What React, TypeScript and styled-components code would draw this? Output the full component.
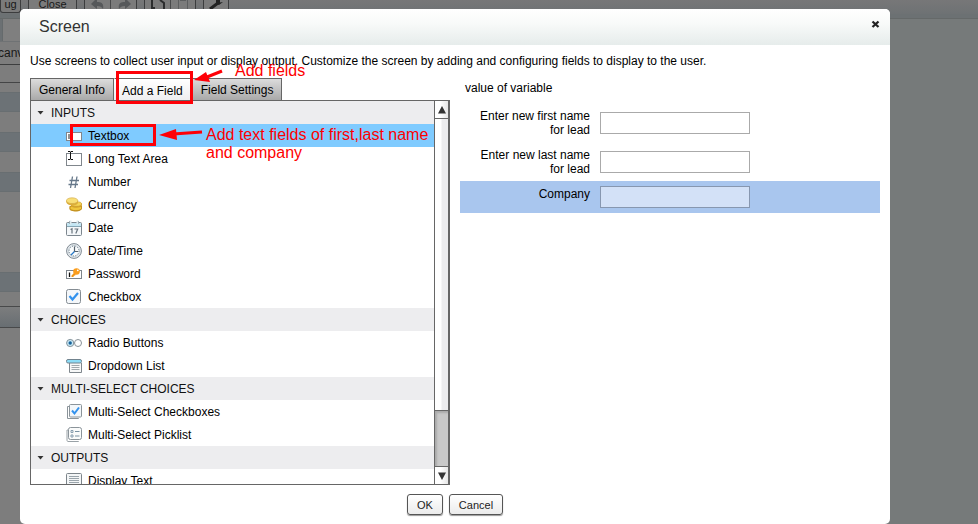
import React from "react";
import styled, { createGlobalStyle, css } from "styled-components";

const GlobalStyle = createGlobalStyle`
  *, *::before, *::after { box-sizing: border-box; }
  body {
    margin: 0;
    background: #767a7a;
    overflow: hidden;
    font-family: "Liberation Sans", Arial, sans-serif;
    font-size: 12px;
    line-height: 14px;
    color: #000;
  }
  button, input { font: inherit; color: inherit; }
`;

/* ---------- Canvas behind the dialog ---------- */

const Page = styled.div`
  position: relative;
  min-height: 100vh;
  display: flex;
  flex-direction: column;
  overflow: hidden;
`;

const Toolbar = styled.div`
  display: flex;
  align-items: flex-start;
  gap: 7px;
  height: 14px;
  background: linear-gradient(#777778, #6e7274);
`;

const ToolGroup = styled.div`
  display: flex;
  height: 13px;
  border: 1px solid #3c3d3e;
  border-top: 0;
  border-radius: 0 0 3px 3px;
  background: #7b7b7b;
`;

const ToolButton = styled.button<{ $width: number }>`
  width: ${(p) => p.$width}px;
  height: 12px;
  padding: 0;
  border: 0;
  background: none;
  font-size: 11px;
  line-height: 8px;
  color: #191919;
  display: flex;
  justify-content: center;
  align-items: flex-start;

  & + & { border-left: 1px solid #48494a; }
`;

const SubBar = styled.div`
  height: 5px;
  background: #6c7173;
  border-bottom: 1px solid #656969;
`;

const SidePanel = styled.aside`
  width: 60px;
  flex: 1;
  background: #7d7d7d;
  display: flex;
  flex-direction: column;
`;

const SideTabs = styled.div`
  height: 23px;
  padding-left: 2px;
  background: #6b7073;
  border-bottom: 1px solid #6f7274;
`;

const SideTab = styled.div`
  height: 22px;
  border-left: 1px solid #656a6c;
  background: #7f7f7f;
`;

const SideText = styled.div`
  height: 23px;
  line-height: 22px;
  text-indent: -2px;
  border-bottom: 1px solid #3d3e3f;
  color: #191919;
`;

const SideStripe = styled.div<{ $height: number; $tone?: "blue" | "plain" | "head" }>`
  height: ${(p) => p.$height}px;
  ${(p) =>
    p.$tone === "blue" &&
    css`
      background: #6c7276;
      border: 1px solid #686e71;
      border-width: 1px 0;
    `}
  ${(p) =>
    p.$tone === "head" &&
    css`
      background: linear-gradient(#7c7d7e, #686e72);
      border: 1px solid #48494a;
      border-width: 1px 0;
    `}
`;

const Rule = styled.div`
  height: 1px;
  background: #444546;
`;

/* ---------- Dialog ---------- */

const Overlay = styled.div`
  position: absolute;
  inset: 0;
  padding: 9px 88px 0 20px;
`;

const Dialog = styled.section`
  position: relative;
  border-radius: 5px;
  background: #fff;
`;

const DialogHeader = styled.header`
  display: flex;
  align-items: center;
  justify-content: space-between;
  height: 36px;
  padding: 0 9px 0 19px;
  border-radius: 5px 5px 0 0;
  background: linear-gradient(#fff, #f8faf9 40%, #e6eceb);
`;

const Title = styled.h1`
  margin: 0;
  font-size: 16px;
  line-height: 20px;
  font-weight: 400;
  color: #333;
`;

const CloseButton = styled.button`
  display: flex;
  width: 10px;
  height: 20px;
  padding: 3px 0;
  border: 0;
  background: none;
`;

const Intro = styled.p`
  margin: 0;
  padding: 9px 10px 10px;
`;

const Columns = styled.div`
  display: grid;
  grid-template-columns: 420px minmax(0, 1fr);
  gap: 10px;
  padding: 0 10px;
`;

const Tabs = styled.div`
  display: flex;
  height: 22px;
`;

const Tab = styled.button<{ $active?: boolean }>`
  padding: ${(p) => (p.$active ? "2px 8px 0 7px" : "0 8px")};
  border: 1px solid #666;
  border-bottom: 0;
  background: ${(p) =>
    p.$active ? "linear-gradient(#fff, #eeeeef)" : "linear-gradient(#dcdcdc, #a9a9a9)"};
  border-color: ${(p) => (p.$active ? "#666 transparent" : "#666")};
`;

const ListBox = styled.div`
  display: flex;
  height: 385px;
  border: 1px solid #666;
  border-right-width: 2px;
`;

const ListContent = styled.div`
  flex: 1;
  overflow: hidden;
`;

const GroupHead = styled.h2`
  display: flex;
  align-items: center;
  gap: 7px;
  height: 23px;
  margin: 0;
  padding-left: 6px;
  background: #ededef;
  font-size: 12px;
  font-weight: 400;
  color: #111;
`;

const Items = styled.ul`
  margin: 0;
  padding: 0;
  list-style: none;
`;

const Item = styled.li<{ $selected?: boolean }>`
  display: flex;
  align-items: center;
  gap: 6px;
  height: 23px;
  padding-left: 35px;
  background: ${(p) => (p.$selected ? "#7fcbff" : "#fff")};
`;

const ScrollBar = styled.div`
  display: flex;
  flex-direction: column;
  width: 14px;
  border-left: 1px solid #666;
`;

const ScrollButton = styled.button`
  display: flex;
  align-items: center;
  justify-content: center;
  height: 17px;
  padding: 0;
  border: 0;
  background: linear-gradient(90deg, #fff 40%, #e6e6e6);
`;

const Track = styled.div`
  flex: 1;
  border-top: 1px solid #666;
  background: linear-gradient(90deg, #fff 45%, #ececee 55%);
`;

const Thumb = styled.div`
  height: 57px;
  border: 1px solid #666;
  border-width: 1px 0;
  background: #c8c8c8;
  box-shadow: inset 2px 2px 2px #aaa;
`;

const Preview = styled.form`
  padding-top: 3px;
`;

const PreviewTitle = styled.p`
  margin: 0;
  padding: 0 5px 8px;
`;

const FieldRow = styled.label<{ $selected?: boolean }>`
  display: grid;
  grid-template-columns: 130px 150px;
  column-gap: 10px;
  align-items: start;
  padding: 5px 0;
  background: ${(p) => (p.$selected ? "#a9c6ee" : "transparent")};
`;

const FieldLabel = styled.span`
  padding: 1px 0 0 10px;
  text-align: right;
`;

const FieldInput = styled.input<{ $selected?: boolean }>`
  align-self: center;
  width: 150px;
  height: 22px;
  padding: 2px 4px;
  border: 1px solid ${(p) => (p.$selected ? "#8797b0" : "#aaa")};
  border-radius: 0;
  background: ${(p) => (p.$selected ? "#d3e1f7" : "#fff")};
`;

const Footer = styled.footer`
  display: flex;
  justify-content: center;
  gap: 6px;
  padding: 9px 0 9px;
`;

const ActionButton = styled.button`
  height: 21px;
  padding: 0 9px;
  border: 1px solid #555;
  border-radius: 3px;
  background: linear-gradient(#fff, #ebebeb);
  box-shadow: 0 1px 1px #999;
  font-size: 11px;
  color: #222;
`;

/* ---------- Red notes over the dialog ---------- */

const Mark = styled.div<{ $x: number; $y: number; $w: number; $h: number }>`
  position: absolute;
  left: ${(p) => p.$x}px;
  top: ${(p) => p.$y}px;
  width: ${(p) => p.$w}px;
  height: ${(p) => p.$h}px;
  border: 3px solid #fe0007;
  pointer-events: none;
`;

const Note = styled.div<{ $x: number; $y: number }>`
  position: absolute;
  left: ${(p) => p.$x}px;
  top: ${(p) => p.$y}px;
  width: 232px;
  font-size: 16px;
  line-height: 18px;
  color: #fe0000;
  pointer-events: none;
`;

const ArrowSvg = styled.svg<{ $x: number; $y: number }>`
  position: absolute;
  left: ${(p) => p.$x}px;
  top: ${(p) => p.$y}px;
  pointer-events: none;
`;

/* ---------- Icons ---------- */

const Svg = ({ children }: { children: React.ReactNode }) => (
  <svg width="16" height="16" viewBox="0 0 16 16" fill="none" aria-hidden="true">
    {children}
  </svg>
);

const icons: Record<string, React.ReactNode> = {
  textbox: (
    <Svg>
      <rect x="0.5" y="4.5" width="15" height="8" fill="#fff" stroke="#80868c" />
      <path d="M3 6v5" stroke="#222" />
    </Svg>
  ),
  longtext: (
    <Svg>
      <rect x="0.5" y="2.5" width="15" height="12" fill="#fff" stroke="#80868c" />
      <path d="M2 .5h2l.5 .5.5-.5h2M4.500 1v7M2 8.500h2l.5-.5.5.5h2" stroke="#111" />
    </Svg>
  ),
  number: (
    <Svg>
      <path d="M6.500 2.500 4.500 14M11 2.500 9 14M3.500 6.500h9.500M2.500 10.500h9.500" stroke="#66788a" strokeWidth="1.300" />
    </Svg>
  ),
  currency: (
    <Svg>
      <path d="M3.500 9v3c0 1.500 3 2.500 6.300 2.500S16 13 16 11.500V8.500z" fill="#c9951f" />
      <ellipse cx="9.800" cy="11" rx="6" ry="2.600" fill="#efc63c" stroke="#b98820" strokeWidth=".6" />
      <path d="M5 6.500v2c0 1.500 2.500 2.300 5.500 2.300s5.200-1 5.200-2.500V6.500z" fill="#d6a42c" />
      <ellipse cx="10.400" cy="7" rx="5.200" ry="2.300" fill="#f4d456" stroke="#c4942a" strokeWidth=".6" />
      <path d="M.3 3.500v2C1 7.500 4 8.500 6.500 8.500s5.500-1 5.500-3v-2z" fill="#dcae3a" />
      <ellipse cx="6.100" cy="3.700" rx="5.800" ry="2.900" fill="#f8df77" stroke="#d0a440" strokeWidth=".6" />
    </Svg>
  ),
  date: (
    <Svg>
      <rect x=".5" y="2.500" width="15" height="13" rx="1" fill="#f4f7f9" stroke="#7c868e" />
      <path d="M1 3h14v3.500H1z" fill="#c3e6f3" />
      <path d="M1 6.500h14" stroke="#86a6b4" />
      <path d="M4.500 .5v4M11.500 .5v4" stroke="#dce9ee" strokeWidth="2" />
      <path d="M3.500 1v3M12.500 1v3" stroke="#8da0aa" strokeWidth=".7" />
      <path d="M4.500 9.500 6 8.700V13.500M8.500 9h3.200L9.800 13.500" stroke="#68747d" strokeWidth="1.200" />
    </Svg>
  ),
  datetime: (
    <Svg>
      <circle cx="8" cy="8" r="7.400" fill="#e9eef2" stroke="#7f8992" />
      <circle cx="8" cy="8" r="5.600" fill="#fafcfd" stroke="#b2bdc5" strokeWidth=".6" />
      <circle cx="8" cy="8" r="4.900" stroke="#617382" strokeDasharray="1 1.566" />
      <path d="M8.500 3.500V8.500H12" stroke="#56616b" strokeWidth="1.200" />
      <path d="M8.500 8.500 5 12" stroke="#2478c8" strokeWidth="1.300" />
    </Svg>
  ),
  password: (
    <Svg>
      <rect x=".5" y="4.500" width="15" height="8" fill="#fff" stroke="#7e858b" />
      <path d="M3.500 6.500v4.500" stroke="#111" strokeWidth="1.300" />
      <path d="M9 6 5.500 9.500v1.500h2l.3-1.200 1.400-.3.300-1.200 1.500-.6z" fill="#f09414" />
      <circle cx="10.500" cy="5.500" r="3.300" fill="#fb9d1c" />
      <circle cx="11.800" cy="4.300" r=".9" fill="#fff" />
    </Svg>
  ),
  checkbox: (
    <Svg>
      <rect x=".5" y=".5" width="14" height="14" rx="2" fill="#f4f7fa" stroke="#848c93" />
      <path d="m3.500 7 3 3.500 5.500-6.500" stroke="#3292ee" strokeWidth="2.200" />
    </Svg>
  ),
  radio: (
    <Svg>
      <circle cx="4.200" cy="8" r="3.600" fill="#c9e9f7" stroke="#829199" />
      <circle cx="4.200" cy="8" r="1.700" fill="#17639a" />
      <circle cx="12" cy="8" r="3.500" fill="#fff" stroke="#879198" />
    </Svg>
  ),
  dropdown: (
    <Svg>
      <path d="M3.500 5v9.500h12V5" fill="#f7f8f8" stroke="#7f878d" />
      <rect x=".5" y="1.500" width="15" height="3.500" rx="1.500" fill="#8bdcf7" stroke="#71838e" />
      <path d="M5.500 7.500h8M5.500 9.500h8M5.500 11.500h8" stroke="#a0a8ad" />
    </Svg>
  ),
  multicheck: (
    <Svg>
      <path d="M3 2.500H1.500v12h11V14" stroke="#8b949a" />
      <rect x="3.500" y=".5" width="12" height="12.500" rx="1" fill="#f3f7fa" stroke="#8b949a" />
      <path d="m6 6.500 2.500 3 4.500-6" stroke="#3292ee" strokeWidth="2" />
    </Svg>
  ),
  picklist: (
    <Svg>
      <path d="M2.500 3H1v10.500c0 .5.500 1 1 1h10.500V14" stroke="#9aa2a7" />
      <rect x="2.500" y=".5" width="13" height="12" rx="2" fill="#fafbfb" stroke="#8b949a" />
      <path d="M5 3.500h2v2H5zM5 8h2v2H5z" stroke="#899fb0" />
      <path d="M9 4.500h4.500M9 9h4.500" stroke="#7891a3" />
    </Svg>
  ),
  display: (
    <Svg>
      <rect x=".5" y=".5" width="15" height="15" rx="1" fill="#f4f6f7" stroke="#7d858b" />
      <path d="M3 3.500h10M3 5.500h10M3 7.500h10M3 9.500h10M3 11.500h10" stroke="#9aa4ab" />
    </Svg>
  ),
};

const groups = [
  {
    title: "INPUTS",
    items: [
      ["textbox", "Textbox"],
      ["longtext", "Long Text Area"],
      ["number", "Number"],
      ["currency", "Currency"],
      ["date", "Date"],
      ["datetime", "Date/Time"],
      ["password", "Password"],
      ["checkbox", "Checkbox"],
    ],
  },
  {
    title: "CHOICES",
    items: [
      ["radio", "Radio Buttons"],
      ["dropdown", "Dropdown List"],
    ],
  },
  {
    title: "MULTI-SELECT CHOICES",
    items: [
      ["multicheck", "Multi-Select Checkboxes"],
      ["picklist", "Multi-Select Picklist"],
    ],
  },
  { title: "OUTPUTS", items: [["display", "Display Text"]] },
];

const fields = [
  { label: "Enter new first name for lead" },
  { label: "Enter new last name for lead" },
  { label: "Company", selected: true },
];

const ToolIcon = ({ children }: { children: React.ReactNode }) => (
  <svg width="18" height="12" viewBox="0 0 18 12" fill="none" aria-hidden="true">
    {children}
  </svg>
);

const Background = () => (
  <>
    <Toolbar>
      <ToolGroup>
        <ToolButton $width={19}>ug</ToolButton>
      </ToolGroup>
      <ToolGroup>
        <ToolButton $width={47}>Close</ToolButton>
      </ToolGroup>
      <ToolGroup>
        <ToolButton $width={25} aria-label="Undo">
          <ToolIcon>
            <path d="M2 4 8-2v4c5 0 7 2 6 7-1-2-3-3-6-3v3z" fill="#56585a" />
          </ToolIcon>
        </ToolButton>
        <ToolButton $width={26} aria-label="Redo">
          <ToolIcon>
            <path d="m16 4-6-6v4C5 2 3 4 4 9c1-2 3-3 6-3v3z" fill="#56585a" />
          </ToolIcon>
        </ToolButton>
      </ToolGroup>
      <ToolGroup>
        <ToolButton $width={25} aria-label="Copy">
          <ToolIcon>
            <path d="M3 0v8h3M11 0l4 3v6" stroke="#2c2d2e" strokeWidth="2" />
          </ToolIcon>
        </ToolButton>
        <ToolButton $width={25} aria-label="Paste">
          <ToolIcon>
            <path d="M4.500 0v12M13.500 0v12M6 .5h6" stroke="#5c5e5f" />
          </ToolIcon>
        </ToolButton>
      </ToolGroup>
      <ToolGroup>
        <ToolButton $width={24} aria-label="Settings">
          <ToolIcon>
            <path d="m3 9 8-6" stroke="#222" strokeWidth="3" />
            <path d="M9 0v4l3 1 4-3-3 .500V0z" fill="#222" />
          </ToolIcon>
        </ToolButton>
      </ToolGroup>
    </Toolbar>
    <SubBar />
    <SidePanel>
      <SideTabs>
        <SideTab />
      </SideTabs>
      <SideText>canvas</SideText>
      <SideStripe $height={17} />
      <Rule />
      <SideStripe $height={9} />
      <SideStripe $height={20} $tone="blue" />
      <SideStripe $height={20} />
      <SideStripe $height={20} $tone="blue" />
      <SideStripe $height={20} />
      <SideStripe $height={20} $tone="blue" />
      <SideStripe $height={80} />
      <SideStripe $height={20} $tone="blue" />
      <SideStripe $height={14} />
      <SideStripe $height={22} $tone="head" />
    </SidePanel>
  </>
);

export default function App() {
  return (
    <Page>
      <GlobalStyle />
      <Background />
      <Overlay>
        <Dialog role="dialog" aria-labelledby="dialog-title">
          <DialogHeader>
            <Title id="dialog-title">Screen</Title>
            <CloseButton aria-label="Close dialog">
              <svg width="9" height="9" viewBox="0 0 9 9" aria-hidden="true">
                <path d="M1.500 1.500l6 5.500M7.500 1.500l-6 5.500" stroke="#222" strokeWidth="2.300" />
              </svg>
            </CloseButton>
          </DialogHeader>
          <Intro>
            Use screens to collect user input or display output. Customize the screen by adding and
            configuring fields to display to the user.
          </Intro>
          <Columns>
            <div>
              <Tabs role="tablist">
                <Tab role="tab">General Info</Tab>
                <Tab role="tab" aria-selected $active>
                  Add a Field
                </Tab>
                <Tab role="tab">Field Settings</Tab>
              </Tabs>
              <ListBox>
                <ListContent>
                  {groups.map((g) => (
                    <section key={g.title}>
                      <GroupHead>
                        <svg width="7" height="4" viewBox="0 0 7 4" aria-hidden="true">
                          <path d="M.5 0h6L3.500 3.500z" fill="#333" />
                        </svg>
                        {g.title}
                      </GroupHead>
                      <Items>
                        {g.items.map(([icon, name]) => (
                          <Item key={name} $selected={icon === "textbox"}>
                            {icons[icon]}
                            {name}
                          </Item>
                        ))}
                      </Items>
                    </section>
                  ))}
                </ListContent>
                <ScrollBar>
                  <ScrollButton aria-label="Scroll up">
                    <svg width="8" height="8" aria-hidden="true">
                      <path d="M4 0 8 7.500H0z" fill="#333" />
                    </svg>
                  </ScrollButton>
                  <Track />
                  <Thumb />
                  <ScrollButton aria-label="Scroll down">
                    <svg width="8" height="8" aria-hidden="true">
                      <path d="M0 .5h8L4 8z" fill="#333" />
                    </svg>
                  </ScrollButton>
                </ScrollBar>
              </ListBox>
            </div>
            <Preview>
              <PreviewTitle>value of variable</PreviewTitle>
              {fields.map((f) => (
                <FieldRow key={f.label} $selected={f.selected}>
                  <FieldLabel>{f.label}</FieldLabel>
                  <FieldInput type="text" $selected={f.selected} />
                </FieldRow>
              ))}
            </Preview>
          </Columns>
          <Footer>
            <ActionButton>OK</ActionButton>
            <ActionButton>Cancel</ActionButton>
          </Footer>

          <Mark $x={96} $y={62} $w={77} $h={33} />
          <Mark $x={50} $y={115} $w={86} $h={22} />
          <ArrowSvg $x={173} $y={60} width="32" height="14" aria-hidden="true">
            <path d="M29 2 14 8" stroke="#fe0007" strokeWidth="3" />
            <path d="M1 11 13 3l4 10z" fill="#fe0007" />
          </ArrowSvg>
          <ArrowSvg $x={139} $y={118} width="44" height="14" aria-hidden="true">
            <path d="M43 5 14 7" stroke="#fe0007" strokeWidth="3" />
            <path d="M0 8 17 2l1 11z" fill="#fe0007" />
          </ArrowSvg>
          <Note $x={215} $y={53}>Add fields</Note>
          <Note $x={186} $y={117}>Add text fields of first,last name and company</Note>
        </Dialog>
      </Overlay>
    </Page>
  );
}
